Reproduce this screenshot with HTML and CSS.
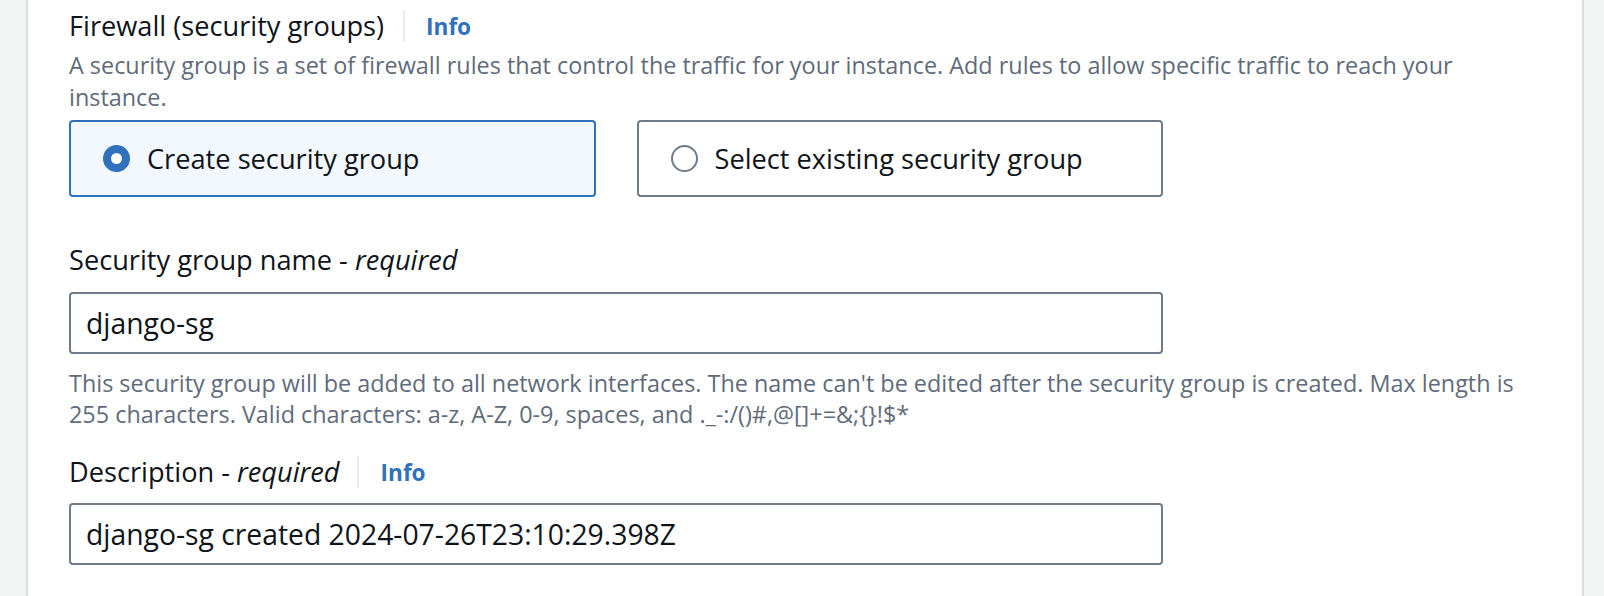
FILE: index.html
```html
<!DOCTYPE html>
<html lang="en">
<head>
<meta charset="utf-8">
<title>Firewall (security groups)</title>
<link rel="stylesheet" href="styles.css">
</head>
<body>
<div class="side side-left"></div>
<main class="panel">
  <section class="field">
    <div class="field-header">
      <span class="title">Firewall (security groups)</span>
      <span class="divider"></span>
      <a class="info" href="#">Info</a>
    </div>
    <p class="desc">A security group is a set of firewall rules that control the traffic for your instance. Add rules to allow specific traffic to reach your instance.</p>
    <div class="tiles">
      <label class="tile tile-selected">
        <span class="radio radio-on"></span>
        <span class="tile-label">Create security group</span>
      </label>
      <label class="tile">
        <span class="radio"></span>
        <span class="tile-label">Select existing security group</span>
      </label>
    </div>
  </section>

  <section class="field field-name">
    <div class="field-header">
      <span class="label">Security group name - <em>required</em></span>
    </div>
    <div class="input">django-sg</div>
    <p class="desc help">This security group will be added to all network interfaces. The name can't be edited after the security group is created. Max length is 255 characters. Valid characters: a-z, A-Z, 0-9, spaces, and ._-:/()#,@[]+=&amp;;{}!$*</p>
  </section>

  <section class="field field-desc">
    <div class="field-header">
      <span class="label">Description - <em>required</em></span>
      <span class="divider divider-sm"></span>
      <a class="info" href="#">Info</a>
    </div>
    <div class="input">django-sg created 2024-07-26T23:10:29.398Z</div>
  </section>
</main>
<div class="side side-right"></div>
</body>
</html>
```
FILE: styles.css
```css
* { box-sizing: border-box; }

html, body {
  margin: 0;
  height: 596px;
  overflow: hidden;
}

body {
  display: flex;
  background: #f2f3f3;
  font-family: "Open Sans", "Noto Sans", sans-serif;
  color: #0f141a;
}

.side-left { width: 26px; flex: none; }
.side-right { width: 20px; flex: none; }

.panel {
  flex: 1;
  background: #ffffff;
  border-left: 2px solid #dadddf;
  border-right: 2px solid #dadddf;
  padding: 8px 41px 0 41px;
}

.field-header {
  display: flex;
  align-items: center;
  height: 36px;
}

.title, .label {
  font-size: 27.2px;
  line-height: 36px;
  color: #0f141a;
}

.label em { font-style: italic; }

.divider {
  width: 2px;
  height: 32px;
  background: #e9ebed;
  margin: 0 21px 0 19px;
}

.divider-sm { margin: 0 22px 0 17px; }

.info {
  font-size: 22.6px;
  font-weight: 700;
  color: #2f71bd;
  text-decoration: none;
}

.desc {
  margin: 5px 0 0 0;
  font-size: 23.4px;
  line-height: 32px;
  color: #5f6b7a;
}

.tiles {
  display: grid;
  grid-template-columns: 1fr 1fr;
  column-gap: 41px;
  max-width: 1094px;
  margin-top: 7px;
}

.tile {
  display: flex;
  align-items: center;
  height: 77px;
  padding-left: 32px;
  border: 2px solid #6f7b88;
  border-radius: 4px;
  background: #ffffff;
}

.tile-selected {
  border-color: #2f71bd;
  background: #f2f8fd;
}

.radio {
  width: 27px;
  height: 27px;
  flex: none;
  border-radius: 50%;
  border: 2px solid #6f7b88;
  background: #ffffff;
  margin-right: 17px;
}

.radio-on {
  border: 8.5px solid #2f71bd;
}

.tile-label {
  font-size: 27.2px;
  color: #0f141a;
}

.field-name { margin-top: 45px; }

.input {
  max-width: 1094px;
  height: 62px;
  margin-top: 14px;
  padding-left: 15px;
  display: flex;
  align-items: center;
  border: 2px solid #6f7b88;
  border-radius: 4px;
  font-size: 28.3px;
  color: #0f141a;
}

.help {
  margin-top: 14px;
  line-height: 31px;
}

.field-desc { margin-top: 24px; }
.field-desc .input { margin-top: 13px; }
```
